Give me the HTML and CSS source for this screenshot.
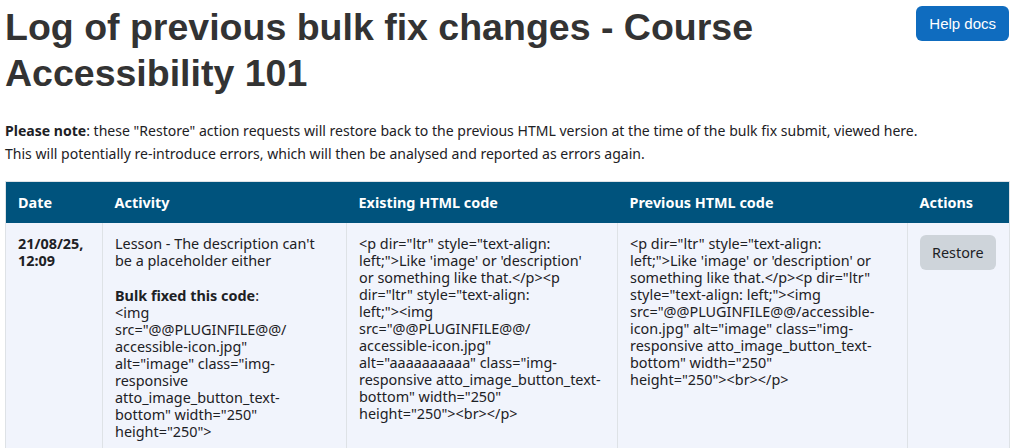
FILE: index.html
```html
<!DOCTYPE html>
<html lang="en">
<head>
<meta charset="utf-8">
<title>Log of previous bulk fix changes</title>
<link rel="stylesheet" href="styles.css">
</head>
<body>
<div class="page">
  <div class="page-header">
    <h1 class="title">Log of previous bulk fix changes - Course Accessibility 101</h1>
    <a class="btn btn-primary" href="#">Help docs</a>
  </div>
  <p class="note"><strong>Please note</strong>: these "Restore" action requests will restore back to the previous HTML version at the time of the bulk fix submit, viewed here.<br>This will potentially re-introduce errors, which will then be analysed and reported as errors again.</p>
  <table class="log-table">
    <colgroup>
      <col class="c-date"><col class="c-act"><col class="c-ex"><col class="c-prev"><col class="c-actions">
    </colgroup>
    <thead>
      <tr><th>Date</th><th>Activity</th><th>Existing HTML code</th><th>Previous HTML code</th><th>Actions</th></tr>
    </thead>
    <tbody>
      <tr>
        <td class="date">21/08/25,<br>12:09</td>
        <td>
          <p class="desc">Lesson - The description can't<br>be a placeholder either</p>
          <div><strong>Bulk fixed this code</strong>:</div>
          <div class="code">&lt;img<br>src="@@PLUGINFILE@@/<br>accessible-icon.jpg"<br>alt="image" class="img-<br>responsive<br>atto_image_button_text-<br>bottom" width="250"<br>height="250"&gt;</div>
        </td>
        <td><div class="code">&lt;p dir="ltr" style="text-align:<br>left;"&gt;Like 'image' or 'description'<br>or something like that.&lt;/p&gt;&lt;p<br>dir="ltr" style="text-align:<br>left;"&gt;&lt;img<br>src="@@PLUGINFILE@@/<br>accessible-icon.jpg"<br>alt="aaaaaaaaaa" class="img-<br>responsive atto_image_button_text-<br>bottom" width="250"<br>height="250"&gt;&lt;br&gt;&lt;/p&gt;</div></td>
        <td><div class="code">&lt;p dir="ltr" style="text-align:<br>left;"&gt;Like 'image' or 'description' or<br>something like that.&lt;/p&gt;&lt;p dir="ltr"<br>style="text-align: left;"&gt;&lt;img<br>src="@@PLUGINFILE@@/accessible-<br>icon.jpg" alt="image" class="img-<br>responsive atto_image_button_text-<br>bottom" width="250"<br>height="250"&gt;&lt;br&gt;&lt;/p&gt;</div></td>
        <td><button class="btn btn-secondary" type="button">Restore</button></td>
      </tr>
    </tbody>
  </table>
</div>
</body>
</html>
```
FILE: styles.css
```css
html, body {
  margin: 0;
  background: #ffffff;
}
body {
  font-family: "Noto Sans", "Open Sans", sans-serif;
  font-size: 14.05px;
  line-height: 22.5px;
  color: #1d2125;
}
.page {
  padding: 4px 4px 0 5px;
}
.page-header {
  display: flex;
  justify-content: space-between;
  align-items: flex-start;
}
.title {
  margin: 0;
  font-family: "Liberation Sans", Arial, sans-serif;
  font-weight: 700;
  font-size: 37.5px;
  line-height: 46px;
  color: #333333;
  max-width: 800px;
}
.btn {
  display: inline-block;
  border: none;
  border-radius: 6px;
  text-decoration: none;
  cursor: pointer;
}
.btn-primary {
  margin-top: 2px;
  height: 35px;
  line-height: 35px;
  padding: 0 13px;
  background: #0f6cbf;
  color: #ffffff;
  font-family: "Liberation Sans", Arial, sans-serif;
  font-size: 15px;
  white-space: nowrap;
}
.note {
  margin: 24px 0 16px;
}
.log-table {
  width: 1004px;
  table-layout: fixed;
  border-collapse: collapse;
  border: 1px solid #dee2e6;
  font-size: 14.4px;
  line-height: 17px;
}
.c-date { width: 97px; }
.c-act { width: 244px; }
.c-ex { width: 271px; }
.c-prev { width: 290px; }
.c-actions { width: 102px; }
.log-table th {
  background: #00537d;
  color: #ffffff;
  font-weight: 700;
  text-align: left;
  padding: 12px;
  border: none;
}
.log-table td {
  background: #f1f4fc;
  vertical-align: top;
  padding: 12px;
  border-left: 1px solid #dee2e6;
}
.log-table td.date {
  font-weight: 700;
  border-left: none;
}
.desc {
  margin: 0 0 18px;
}
.code {
  white-space: nowrap;
}
.btn-secondary {
  height: 35px;
  padding: 0 12px;
  background: #ced4da;
  color: #1d2125;
  font-family: "Noto Sans", "Open Sans", sans-serif;
  font-size: 14.4px;
}
```
